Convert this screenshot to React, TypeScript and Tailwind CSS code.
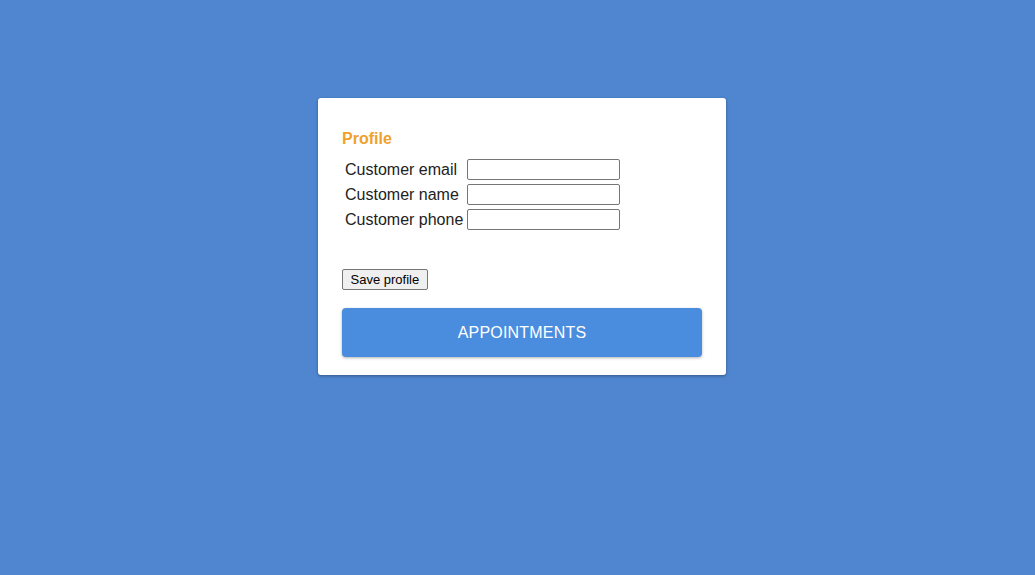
import React from "react";

const fields = ["Customer email", "Customer name", "Customer phone"];

export default function App() {
  return (
    <div
      className="min-h-[575px] w-full bg-[#4f86cf] pt-[98px] pl-[9px] flex justify-center items-start"
      style={{ fontFamily: '"Liberation Sans", Arial, sans-serif' }}
    >
      <div className="w-[408px] bg-white rounded-[3px] shadow-[0_1px_3px_rgba(0,0,0,0.35)] px-6 pt-[31px] pb-[18px]">
        <h3 className="text-[16px] leading-[19px] font-bold text-[#efa12b] mb-[8px]">Profile</h3>
        <table className="border-separate border-spacing-[2px] text-[16px] text-[#222]">
          <tbody>
            {fields.map((f) => (
              <tr key={f}>
                <td className="p-px leading-[21px] whitespace-nowrap">{f}</td>
                <td className="p-px">
                  <input
                    type="text"
                    className="block w-[153px] h-[21px] border border-[#767676] rounded-[2px] bg-white"
                  />
                </td>
              </tr>
            ))}
          </tbody>
        </table>
        <button className="block mt-[36px] h-[21px] px-[7.5px] text-[13px] leading-[19px] text-black bg-[#efefef] border border-[#767676] rounded-[2px]">
          Save profile
        </button>
        <button className="block mt-[18px] w-full h-[49px] bg-[#4a8ddf] text-white text-[16px] rounded-[4px] shadow-[0_1px_3px_rgba(0,0,0,0.3)] tracking-[0.2px]">
          APPOINTMENTS
        </button>
      </div>
    </div>
  );
}
